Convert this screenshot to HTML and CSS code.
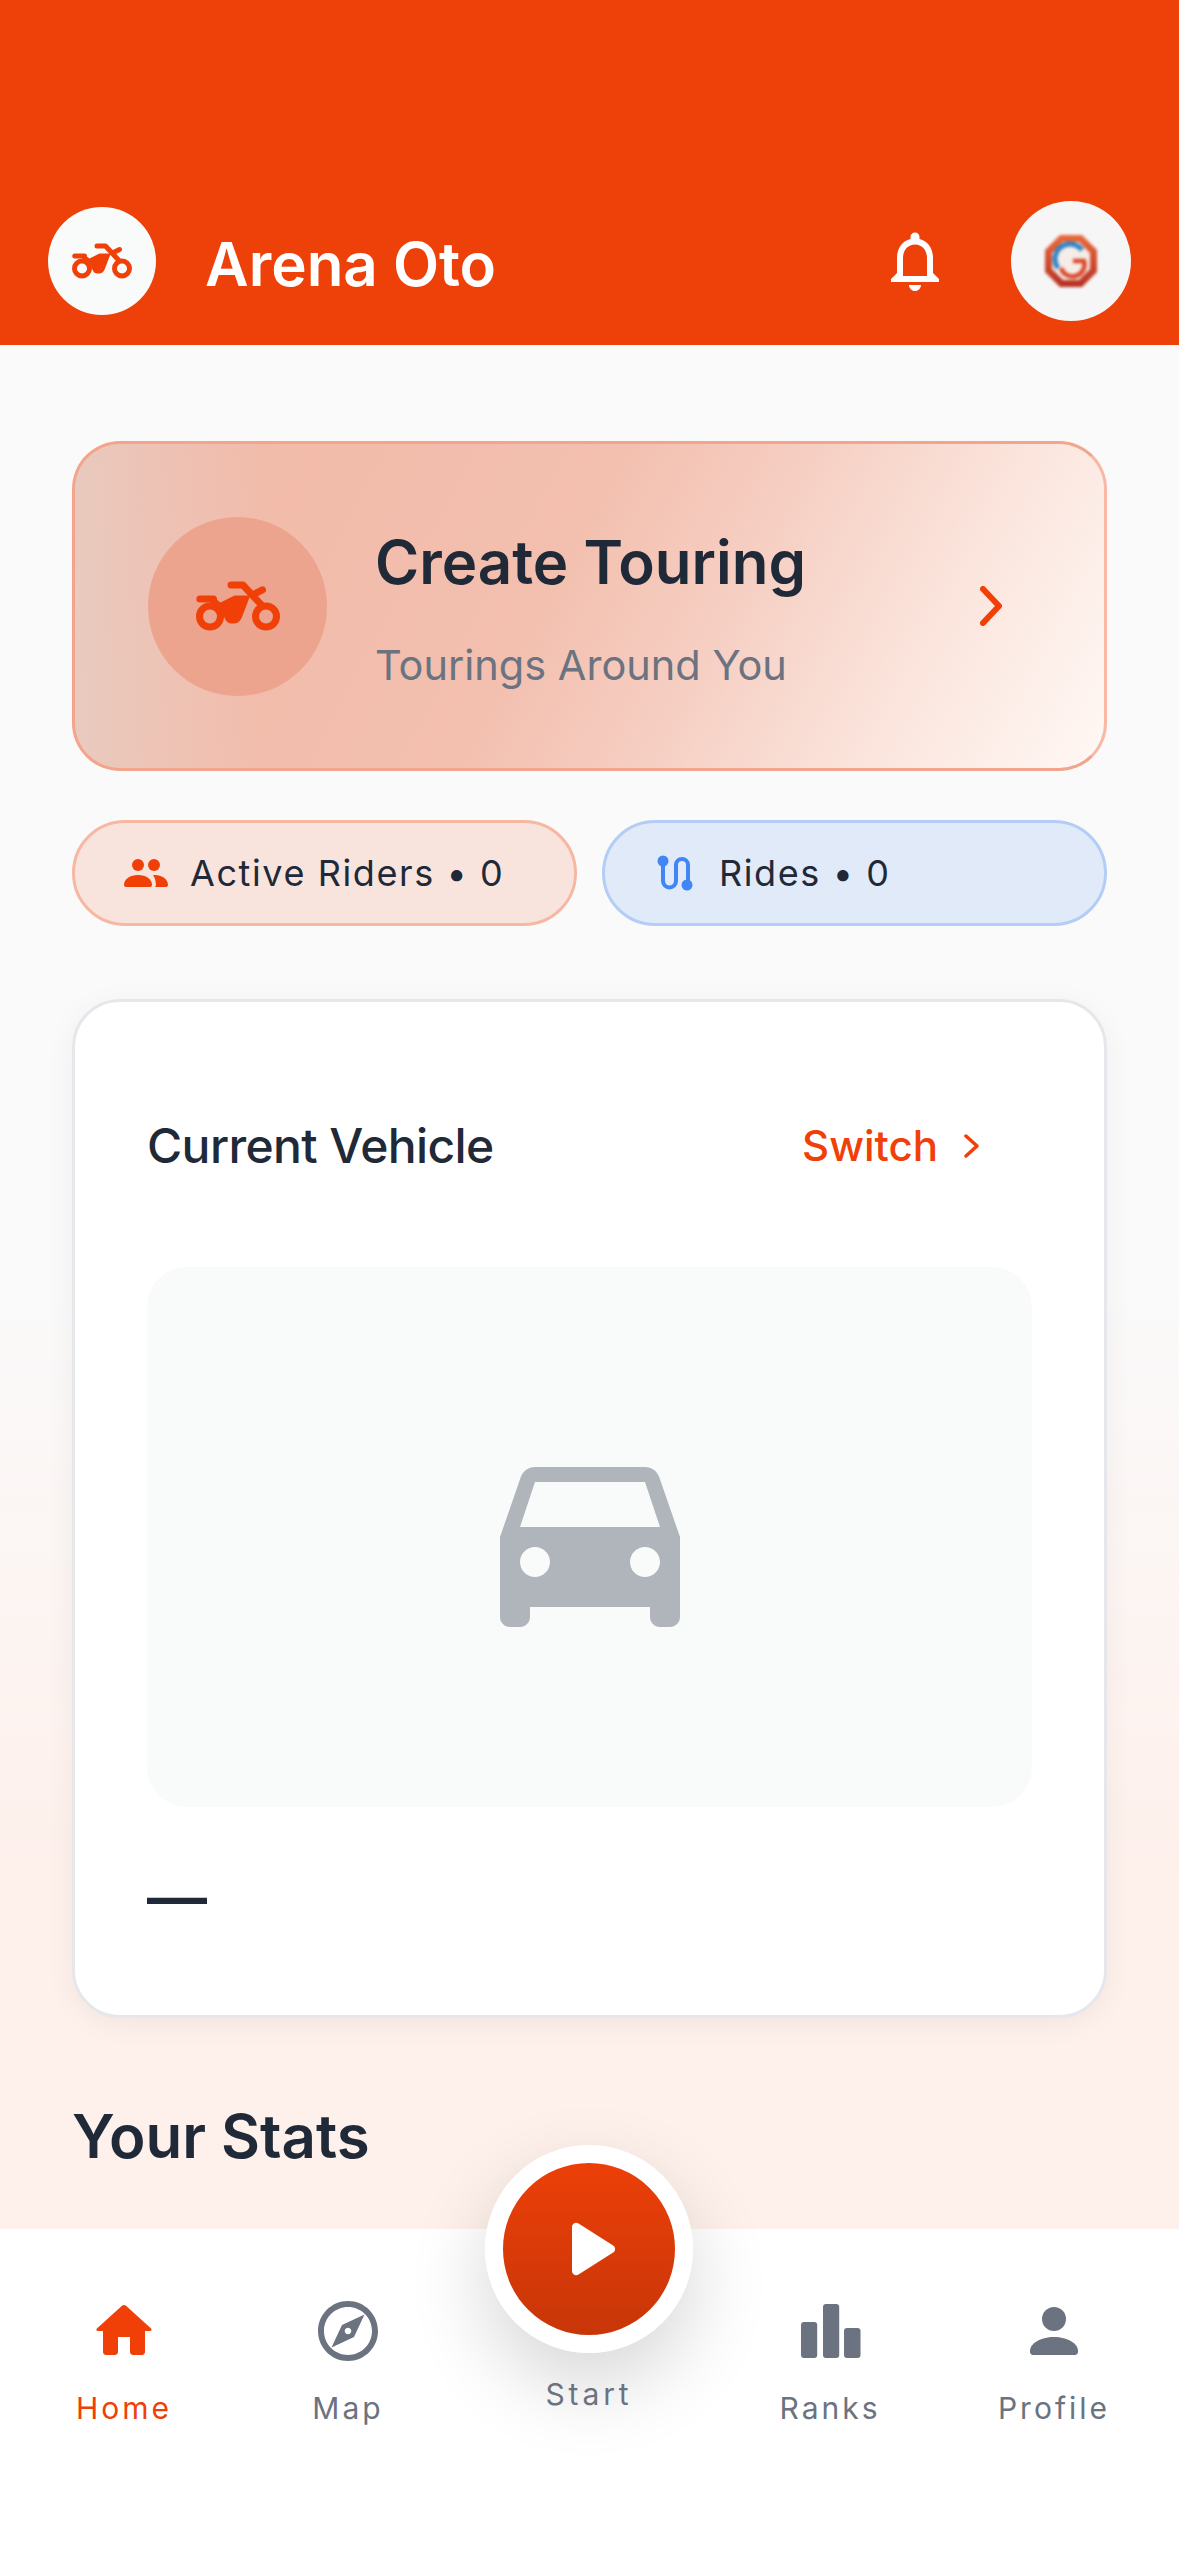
FILE: index.html
```html
<!DOCTYPE html>
<html>
<head>
  <meta http-equiv="Content-Type" content="text/html; charset=utf8">
  <title>Arena Oto</title>
  <link rel="stylesheet" href="styles.css">
</head>
<body>
  <svg class="defs" width="0" height="0">
    <symbol id="bike" viewBox="0 0 24 24">
      <circle class="bike_line" cx="4" cy="15" r="3"/>
      <circle class="bike_line" cx="20" cy="15" r="3"/>
      <path class="bike_line" d="M1.100 10H5M10 6h3.400l5.200 5.600M17 8.400l2-1"/>
      <path class="bike_body" d="M5 9.500L7 11l4-2h4.500L13.200 15c-.5 1.500-1.400 2-2.700 2-1.300 0-2-.5-2.500-2-.2-1.500-2-3.500-4-4z"/>
    </symbol>
  </svg>

  <div class="app">
    <div class="header">
      <div class="logo">
        <svg class="logo_icon"><use href="#bike"/></svg>
      </div>
      <div class="app_title">Arena Oto</div>
      <svg class="bell" viewBox="0 0 24 24"><path d="M12 22c1.100 0 2-.9 2-2h-4c0 1.100.9 2 2 2zm6-6v-5c0-3.070-1.630-5.640-4.500-6.320V4c0-.83-.67-1.500-1.500-1.500s-1.500.67-1.500 1.500v.68C7.640 5.360 6 7.920 6 11v5l-2 2v1h16v-1l-2-2zm-2 1H8v-6c0-2.480 1.510-4.500 4-4.500s4 2.020 4 4.500v6z"/></svg>
      <div class="avatar">
        <svg class="avatar_img" viewBox="0 0 54 54">
          <defs>
            <linearGradient id="oct_fill" x1="0" y1="0" x2="0" y2="1">
              <stop offset="0" stop-color="#ea6a3c"/>
              <stop offset="1" stop-color="#b52f22"/>
            </linearGradient>
          </defs>
          <polygon fill="url(#oct_fill)" points="16,1 38,1 53,16 53,38 38,53 16,53 1,38 1,16"/>
          <polygon class="oct_inner" points="19,8 35,8 46,19 46,35 35,46 19,46 8,35 8,19"/>
          <path class="g_blue" d="M38 16A15 15 0 0 0 14 34"/>
          <path class="g_red" d="M17 34A12 12 0 0 0 40 27H29"/>
        </svg>
      </div>
    </div>

    <div class="content">
      <div class="touring">
        <div class="touring_circle">
          <svg class="touring_icon"><use href="#bike"/></svg>
        </div>
        <div class="touring_text">
          <div class="touring_title">Create Touring</div>
          <div class="touring_sub">Tourings Around You</div>
        </div>
        <svg class="touring_arrow" viewBox="0 0 22 40"><path d="M3 3l16 17L3 37"/></svg>
      </div>

      <div class="pills">
        <div class="pill pill_orange">
          <svg class="pill_icon" viewBox="0 0 48 48">
            <circle cx="16" cy="16" r="6"/>
            <circle cx="32" cy="16" r="6"/>
            <path d="M2 36c0-6 6-10 14-10s14 4 14 10c0 1-1 2-2 2H4c-1 0-2-1-2-2z"/>
            <path d="M31 26.200c8-.8 15 3.800 15 9.800 0 1-1 2-2 2H33c.6-.6.900-1.200.900-2 0-4-1-7.500-2.900-9.800z"/>
          </svg>
          <span>Active Riders • 0</span>
        </div>
        <div class="pill pill_blue">
          <svg class="pill_icon" viewBox="0 0 48 48">
            <path class="route_line" d="M11 12v20a6.500 6.500 0 0 0 13 0V16a6 6 0 0 1 12 0v20"/>
            <circle cx="11" cy="12" r="5.500"/>
            <circle cx="35" cy="36" r="5.500"/>
          </svg>
          <span>Rides • 0</span>
        </div>
      </div>

      <div class="vehicle">
        <div class="vehicle_head">
          <div class="vehicle_title">Current Vehicle</div>
          <div class="switch">
            <span>Switch</span>
            <svg class="switch_arrow" viewBox="0 0 16 24"><path d="M2 2l11 10L2 22"/></svg>
          </div>
        </div>
        <div class="vehicle_photo">
          <svg class="car" viewBox="0 0 24 24"><path d="M18.920 6.010C18.720 5.420 18.160 5 17.500 5h-11c-.66 0-1.210.42-1.420 1.010L3 12v8c0 .55.45 1 1 1h1c.55 0 1-.45 1-1v-1h12v1c0 .55.45 1 1 1h1c.55 0 1-.45 1-1v-8l-2.080-5.990zM6.500 16c-.83 0-1.500-.67-1.500-1.500S5.670 13 6.500 13s1.500.67 1.500 1.500S7.330 16 6.500 16zm11 0c-.83 0-1.500-.67-1.500-1.500s.67-1.500 1.500-1.500 1.500.67 1.500 1.500-.67 1.500-1.500 1.500zM5 11l1.500-4.500h11L19 11H5z"/></svg>
        </div>
        <div class="vehicle_name">—</div>
      </div>

      <div class="stats_title">Your Stats</div>
    </div>

    <div class="nav">
      <div class="nav_item nav_on">
        <svg class="nav_icon" viewBox="0 0 24 24"><path d="M10 19v-5h4v5c0 .55.45 1 1 1h3c.55 0 1-.45 1-1v-7h1.700c.46 0 .68-.57.33-.87L12.670 3.600c-.38-.34-.96-.34-1.340 0l-8.360 7.530c-.34.3-.13.87.33.87H5v7c0 .55.45 1 1 1h3c.55 0 1-.45 1-1z"/></svg>
        <span>Home</span>
      </div>
      <div class="nav_item">
        <svg class="nav_icon" viewBox="0 0 24 24"><path d="M12 2C6.480 2 2 6.480 2 12s4.480 10 10 10 10-4.480 10-10S17.520 2 12 2zm0 18c-4.410 0-8-3.590-8-8s3.590-8 8-8 8 3.590 8 8-3.590 8-8 8zm-5.500-2.500l7.510-3.490L17.500 6.500 9.990 9.990 6.500 17.500zm5.500-6.600c.61 0 1.100.49 1.100 1.100s-.49 1.100-1.100 1.100-1.100-.49-1.100-1.100.49-1.100 1.100-1.100z"/></svg>
        <span>Map</span>
      </div>
      <div class="nav_start">
        <div class="start_btn">
          <svg class="play" viewBox="0 0 24 24"><path d="M8 6.820v10.360c0 .79.87 1.270 1.540.84l8.140-5.180c.62-.39.62-1.290 0-1.690L9.540 5.980C8.870 5.550 8 6.030 8 6.820z"/></svg>
        </div>
        <span>Start</span>
      </div>
      <div class="nav_item">
        <svg class="nav_icon" viewBox="0 0 24 24"><rect x="2.330" y="9" width="5.400" height="12" rx="1"/><rect x="9.670" y="3" width="5.400" height="18" rx="1"/><rect x="16.670" y="11" width="5.500" height="10" rx="1"/></svg>
        <span>Ranks</span>
      </div>
      <div class="nav_item">
        <svg class="nav_icon" viewBox="0 0 24 24"><circle cx="12" cy="8" r="4"/><path d="M12 14c-4.500 0-8 2.200-8 4.600v.4c0 .55.45 1 1 1h14c.55 0 1-.45 1-1v-.4c0-2.400-3.500-4.600-8-4.600z"/></svg>
        <span>Profile</span>
      </div>
    </div>
  </div>
</body>
</html>
```

FILE: styles.css
```css
* {
  box-sizing: border-box;
}
html, body {
  margin: 0;
  padding: 0;
}
body {
  font-family: Inter, "Liberation Sans", sans-serif;
  color: #1f2937;
  background-color: #ffffff;
}
.defs {
  position: absolute;
}
.app {
  width: 1179px;
  height: 2556px;
  display: flex;
  flex-direction: column;
  overflow: hidden;
}

/* header */
.header {
  height: 345px;
  flex: none;
  background-color: #ee4009;
  display: flex;
  align-items: center;
  padding: 177px 48px 0 48px;
}
.logo {
  width: 108px;
  height: 108px;
  border-radius: 50%;
  background-color: #f9fafa;
  display: flex;
  align-items: center;
  justify-content: center;
  flex: none;
}
.logo_icon {
  width: 60px;
  height: 60px;
}
.bike_line {
  fill: none;
  stroke: #f04008;
  stroke-width: 2;
  stroke-linecap: round;
  stroke-linejoin: round;
}
.bike_body {
  fill: #f04008;
}
.app_title {
  margin-left: 49px;
  padding-top: 6px;
  font-size: 60px;
  font-weight: 600;
  color: #ffffff;
  flex: 1;
}
.bell {
  width: 72px;
  height: 72px;
  fill: #ffffff;
  flex: none;
}
.avatar {
  width: 120px;
  height: 120px;
  margin-left: 60px;
  border-radius: 50%;
  background-color: #f6f6f6;
  display: flex;
  align-items: center;
  justify-content: center;
  flex: none;
}
.avatar_img {
  width: 54px;
  height: 54px;
  filter: blur(1.5px);
}
.oct_inner {
  fill: #f6ece8;
}
.g_blue {
  fill: none;
  stroke: #2f86c9;
  stroke-width: 5;
}
.g_red {
  fill: none;
  stroke: #d9482a;
  stroke-width: 4.5;
}

/* page body */
.content {
  flex: 1;
  min-height: 0;
  overflow: hidden;
  padding: 96px 72px 0 72px;
  background: linear-gradient(180deg, #fafafa 0%, #fafafa 50%, #fef0eb 82%, #fef0eb 100%);
}
.touring {
  height: 330px;
  border: 3px solid #f3a48c;
  border-right-color: #f9b8a5;
  border-radius: 48px;
  padding: 0 102px 0 73px;
  display: flex;
  align-items: center;
  background:
    linear-gradient(90deg, rgba(225, 218, 212, 0.5) 0%, rgba(225, 218, 212, 0) 18%),
    linear-gradient(118deg, #f1b9a8 0%, #f3bfae 45%, #f6cfc3 62%, #fbe5dd 80%, #fff8f5 100%);
}
.touring_circle {
  width: 179px;
  height: 179px;
  border-radius: 50%;
  background-color: #eca48e;
  display: flex;
  align-items: center;
  justify-content: center;
  flex: none;
}
.touring_icon {
  width: 84px;
  height: 84px;
}
.touring_text {
  margin-left: 48px;
  padding-top: 4px;
  flex: 1;
}
.touring_title {
  font-size: 60px;
  font-weight: 600;
  line-height: 72px;
}
.touring_sub {
  margin-top: 42px;
  font-size: 41.5px;
  line-height: 50px;
  color: #6b7280;
}
.touring_arrow {
  width: 22px;
  height: 40px;
  fill: none;
  stroke: #f04008;
  stroke-width: 6;
  stroke-linecap: round;
  stroke-linejoin: round;
  flex: none;
}
.pills {
  display: flex;
  gap: 25px;
  margin-top: 49px;
}
.pill {
  flex: 1;
  height: 106px;
  border-radius: 53px;
  display: flex;
  align-items: center;
  padding-left: 47px;
  gap: 20px;
  font-size: 36px;
  letter-spacing: 1.6px;
}
.pill_orange {
  border: 3px solid #f6b7a3;
  background-color: #f9e4dd;
}
.pill_blue {
  border: 3px solid #b4cdf6;
  background-color: #e1eaf8;
  gap: 19px;
}
.pill_icon {
  width: 48px;
  height: 48px;
  flex: none;
}
.pill_orange .pill_icon {
  fill: #f04008;
}
.pill_blue .pill_icon {
  fill: #4285f4;
}
.route_line {
  fill: none;
  stroke: #4285f4;
  stroke-width: 4;
}
.vehicle {
  margin-top: 73px;
  height: 1019px;
  border: 3px solid #e5e7eb;
  border-radius: 48px;
  background-color: #ffffff;
  box-shadow: 0 6px 30px rgba(0, 0, 0, 0.05);
  padding: 0 72px;
}
.vehicle_head {
  height: 265px;
  padding: 22px 52px 0 0;
  display: flex;
  align-items: center;
  justify-content: space-between;
}
.vehicle_title {
  font-size: 48px;
  font-weight: 500;
  letter-spacing: -0.6px;
}
.switch {
  display: flex;
  align-items: center;
  gap: 26px;
  font-size: 42px;
  font-weight: 500;
  color: #f04008;
}
.switch_arrow {
  width: 16px;
  height: 24px;
  fill: none;
  stroke: #f04008;
  stroke-width: 3.5;
  stroke-linecap: round;
  stroke-linejoin: round;
}
.vehicle_photo {
  height: 540px;
  border-radius: 40px;
  background-color: #f9fafa;
  display: flex;
  align-items: center;
  justify-content: center;
}
.car {
  width: 240px;
  height: 240px;
  fill: #b0b5bc;
}
.vehicle_name {
  margin-top: 54px;
  font-size: 60px;
  font-weight: 600;
  line-height: 72px;
}
.stats_title {
  margin-top: 84px;
  font-size: 60px;
  font-weight: 600;
  line-height: 68px;
}

/* bottom bar */
.nav {
  position: relative;
  height: 327px;
  flex: none;
  background-color: #ffffff;
  display: grid;
  grid-template-columns: 222px 226px 256px 226px 222px;
  padding-left: 13px;
  font-size: 30px;
  letter-spacing: 3px;
  color: #6b7280;
}
.nav_item {
  display: flex;
  flex-direction: column;
  align-items: center;
  padding-top: 66px;
  gap: 23px;
}
.nav_icon {
  width: 72px;
  height: 72px;
  fill: #6b7280;
}
.nav_on {
  color: #f04008;
}
.nav_on .nav_icon {
  fill: #f04008;
}
.nav_start {
  display: flex;
  flex-direction: column;
  align-items: center;
  margin-top: -84px;
  gap: 23px;
  letter-spacing: 3.9px;
}
.start_btn {
  width: 208px;
  height: 208px;
  flex: none;
  border-radius: 50%;
  border: 18px solid #ffffff;
  background: linear-gradient(180deg, #f04008 0%, #c43508 100%);
  background-origin: border-box;
  box-shadow: 0 32px 80px rgba(0, 0, 0, 0.16);
  display: flex;
  align-items: center;
  justify-content: center;
}
.play {
  width: 102px;
  height: 102px;
  fill: #ffffff;
}
```
